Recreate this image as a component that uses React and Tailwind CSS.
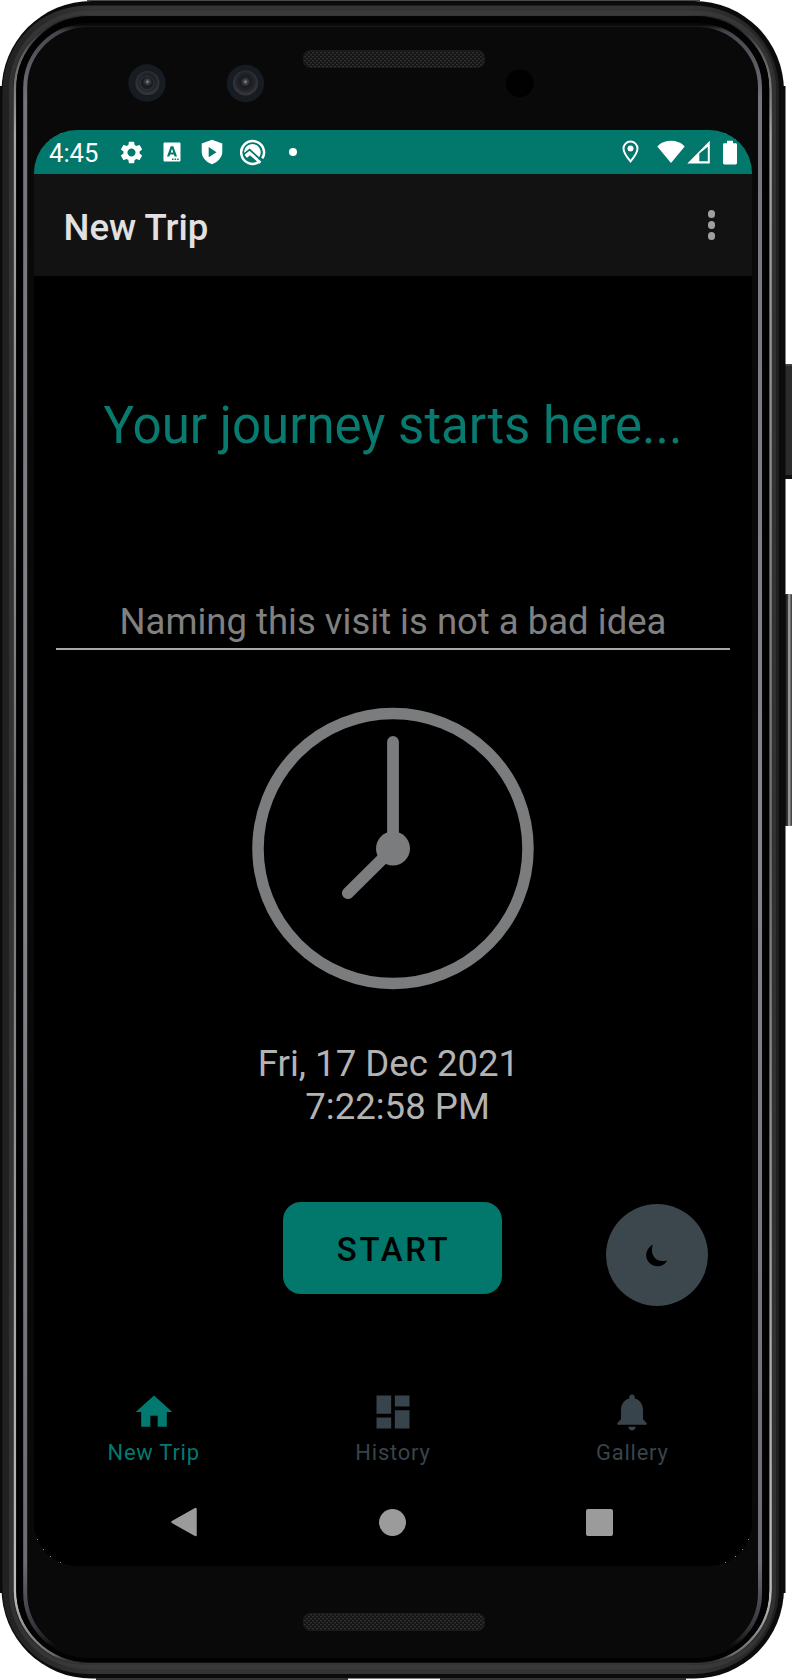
import React from "react";
import { MdSettings, MdHome, MdDashboard } from "react-icons/md";

function PhoneFrame() {
  return (
    <svg className="absolute inset-0" width="792" height="1680" viewBox="0 0 792 1680" aria-hidden="true">
      <defs>
        <linearGradient id="rim" gradientUnits="userSpaceOnUse" x1="0" y1="0" x2="0" y2="1680">
          <stop offset="0.009" stopColor="#3c3c3c" stopOpacity="0" />
          <stop offset="0.03" stopColor="#5a5a5a" />
          <stop offset="0.08" stopColor="#a6a6a6" />
          <stop offset="0.3" stopColor="#8a8a8a" />
          <stop offset="0.5" stopColor="#707070" />
          <stop offset="0.8" stopColor="#aaaaaa" />
          <stop offset="0.95" stopColor="#bdbdbd" />
          <stop offset="0.985" stopColor="#6a6a6a" />
          <stop offset="0.991" stopColor="#3c3c3c" stopOpacity="0" />
        </linearGradient>
        <linearGradient id="glass" gradientUnits="userSpaceOnUse" x1="0" y1="0" x2="0" y2="1680">
          <stop offset="0.0149" stopColor="#5a5a62" stopOpacity="0" />
          <stop offset="0.019" stopColor="#45454c" />
          <stop offset="0.06" stopColor="#74747c" />
          <stop offset="0.5" stopColor="#85858c" />
          <stop offset="0.93" stopColor="#6c6c74" />
          <stop offset="0.965" stopColor="#3a3a42" />
          <stop offset="0.98" stopColor="#5a5a62" stopOpacity="0" />
        </linearGradient>
        <linearGradient id="band" x1="0" y1="0" x2="1" y2="0">
          <stop offset="0" stopColor="#202020" />
          <stop offset="0.03" stopColor="#262626" />
          <stop offset="0.12" stopColor="#343434" />
          <stop offset="0.88" stopColor="#343434" />
          <stop offset="0.97" stopColor="#262626" />
          <stop offset="1" stopColor="#202020" />
        </linearGradient>
        <linearGradient id="volume" x1="0" y1="0" x2="1" y2="0">
          <stop offset="0" stopColor="#151515" />
          <stop offset="0.35" stopColor="#343434" />
          <stop offset="0.55" stopColor="#b0b0b0" />
          <stop offset="1" stopColor="#303030" />
        </linearGradient>
        <radialGradient id="lens" cx="0.5" cy="0.45" r="0.5">
          <stop offset="0" stopColor="#9d9da8" />
          <stop offset="0.14" stopColor="#454550" />
          <stop offset="0.4" stopColor="#191a20" />
          <stop offset="0.75" stopColor="#24262b" />
          <stop offset="1" stopColor="#34373c" />
        </radialGradient>
        <pattern id="mesh" width="4" height="4" patternUnits="userSpaceOnUse">
          <rect width="4" height="4" fill="#151515" />
          <rect width="2" height="1.3" fill="#303030" />
          <rect x="2" y="2" width="2" height="1.3" fill="#303030" />
        </pattern>
      </defs>
      <rect x="784" y="364" width="8" height="115" fill="#2b2b2b" />
      <rect x="784" y="364" width="8" height="2" fill="#444444" />
      <rect x="784" y="475" width="8" height="4" fill="#111111" />
      <rect x="785" y="594" width="7" height="232" rx="1" fill="url(#volume)" />
      <rect x="0" y="86" width="785.5" height="1507" fill="#0b0b0b" />
      <rect x="1.500" y="1" width="782.500" height="1677.500" rx="90" fill="#0b0b0b" />
      <path d="M87 0.5H700" stroke="#4a4a4a" />
      <path d="M96 1679H348M440 1679H686" stroke="#333333" strokeWidth="2" />
      <rect x="2.500" y="5.500" width="776.5" height="1668.5" rx="85" fill="url(#band)" />
      <rect x="11" y="13" width="763" height="1654" rx="76" fill="none" stroke="#404040" strokeWidth="4" opacity="0.55" />
      <rect x="15" y="16" width="755.5" height="1647" rx="73" fill="#020202" stroke="url(#rim)" strokeWidth="2.6" />
      <rect x="23" y="23" width="739.5" height="1635" rx="65" fill="#090909" />
      <rect x="17" y="18" width="751.500" height="1643" rx="71" fill="none" stroke="#020202" strokeWidth="1.500" />
      <rect x="25.2" y="25" width="734.8" height="1631" rx="63" fill="none" stroke="url(#glass)" strokeWidth="4" />
      <circle cx="147" cy="83" r="18.7" fill="#161c22" />
      <circle cx="147.5" cy="83" r="12" fill="url(#lens)" />
      <circle cx="147" cy="83" r="7" fill="none" stroke="#34363b" strokeWidth="1" />
      <circle cx="245.5" cy="83.5" r="18.7" fill="#161c22" />
      <circle cx="245.5" cy="83" r="12.5" fill="url(#lens)" />
      <circle cx="519.8" cy="83.3" r="13.8" fill="#010101" />
      <rect x="303.500" y="50.5" width="181" height="17" rx="7" fill="url(#mesh)" stroke="#1c1c1c" />
      <rect x="303.500" y="1613.5" width="181" height="17" rx="7" fill="url(#mesh)" stroke="#1c1c1c" />
      <path d="M34 174V1523A43 43 0 0 0 77 1566H709A43 43 0 0 0 752 1523V174z" fill="#000000" />
      <path d="M37 1539h1v1h-1zM43 1549h1v1h-1zM50 1556h1v1h-1zM60 1562h1v1h-1zM748 1539h1v1h-1zM742 1549h1v1h-1zM735 1556h1v1h-1zM725 1562h1v1h-1zM50 139h1v1h-1zM60 133h1v1h-1zM725 133h1v1h-1zM735 139h1v1h-1z" fill="#8a8a8a" />
    </svg>
  );
}

function StatusBar() {
  return (
    <div className="flex h-11 shrink-0 items-center bg-[#02776c] pl-[15px] pr-[15px] text-white">
      <span className="w-[66px] pt-[2px] text-[25.6px] leading-[30px]">4:45</span>
      <div className="flex items-center">
        <MdSettings className="ml-[3px] size-[27px]" />
        <svg className="ml-[18px]" width="18" height="20" viewBox="0 0 18 20">
          <path fillRule="evenodd" fill="currentColor" d="M1.5.5h15q1 0 1 1v17q0 1-1 1h-15q-1 0-1-1v-17q0-1 1-1zM7.7 4.2 4 14.5h2.4l.7-2.1h3.8l.7 2.1H14L10.3 4.2zM9 6.8l1.3 3.8H7.7zM9 16.4h1.5v1.5H9zm2.6 0h1.5v1.5h-1.5zm2.6 0h1.5v1.5h-1.5z" />
        </svg>
        <svg className="ml-[19px]" width="24" height="26" viewBox="0 0 24 26">
          <path fillRule="evenodd" fill="currentColor" d="M12 .8 22.3 4.6v8.2c0 5.7-4.3 10.2-10.3 12.5C6 23 1.7 18.5 1.7 12.8V4.6zM8.7 8v10.3l7.8-5.1z" />
        </svg>
        <svg className="ml-[15px]" width="27" height="27" viewBox="0 0 27 27" fill="none" stroke="currentColor">
          <path d="M19.6 23.100A11.4 11.4 0 1 1 23.300 19.400" strokeWidth="2.500" />
          <path d="M5.300 15A8.300 8.300 0 1 1 20.600 17.600L18.300 20.200 11.500 13.800 7.500 18.500z" fill="currentColor" stroke="none" />
          <path d="M4.600 15.400 10.600 10.600 19.600 19" stroke="#02776c" strokeWidth="1.800" />
          <path d="M7.300 17.800 11 14.500 21.500 23.800" strokeWidth="2.600" />
        </svg>
        <span className="ml-[23px] size-2 rounded-full bg-white" />
      </div>
      <div className="ml-auto flex items-center">
        <svg width="17" height="24" viewBox="0 0 17 24">
          <path d="M8.5 1.6A7 7 0 0 0 1.5 8.6c0 4.7 7 12.8 7 12.8s7-8.1 7-12.8a7 7 0 0 0-7-7z" fill="none" stroke="currentColor" strokeWidth="2" />
          <circle cx="8.5" cy="8.6" r="3" fill="currentColor" />
        </svg>
        <svg className="ml-[18px]" width="28" height="24" viewBox="0 0 28 24" fill="currentColor">
          <path d="M.3 6.4C4 2.6 8.500.8 14 .8s10 1.800 13.700 5.600L14 23z" />
        </svg>
        <svg className="ml-[2px]" width="23" height="24" viewBox="0 0 23 24">
          <path fillRule="evenodd" fill="currentColor" d="M22.800.8V23.400H.3zM20.800 6.800 12.300 13.500v7.700h8.500z" />
        </svg>
        <svg className="ml-[13px]" width="14" height="25" viewBox="0 0 14 25" fill="currentColor">
          <path d="M4 .7h6v2.500h2.600q1.400 0 1.400 1.400v18.500q0 1.400-1.400 1.400H1.400Q0 24.500 0 23.100V4.600q0-1.400 1.400-1.400H4z" />
        </svg>
      </div>
    </div>
  );
}

function AppBar() {
  return (
    <header className="flex h-[102px] shrink-0 items-center justify-between bg-[#121212] pl-[29.500px] pr-[37px]">
      <h1 className="pt-[6px] text-[36.600px] font-medium leading-[44px] text-[#e1e1e1]">New Trip</h1>
      <button aria-label="More" className="flex flex-col gap-[3.500px]">
        <span className="size-[7.500px] rounded-full bg-[#a0a0a0]" />
        <span className="size-[7.500px] rounded-full bg-[#a0a0a0]" />
        <span className="size-[7.500px] rounded-full bg-[#a0a0a0]" />
      </button>
    </header>
  );
}

function Clock() {
  return (
    <svg className="ml-[217px] mt-[57px] block shrink-0" width="284" height="283" viewBox="0 0 284 283" fill="none" stroke="#7b7c7d">
      <circle cx="142" cy="141.500" r="135" strokeWidth="11.500" />
      <path d="M142 35v106.500L96.800 186.200" strokeWidth="11.800" strokeLinecap="round" />
      <circle cx="142" cy="141.500" r="17" fill="#7b7c7d" stroke="none" />
    </svg>
  );
}

function BellIcon({ className }) {
  return (
    <svg className={className} viewBox="0 0 24 24" fill="currentColor">
      <path d="M12 22c1.100 0 2-.9 2-2h-4c0 1.100.890 2 2 2zm6-6v-5c0-3.070-1.640-5.640-4.500-6.320V4c0-.830-.670-1.500-1.500-1.500s-1.500.670-1.500 1.500v.680C7.630 5.360 6 7.920 6 11v5l-2 2v1h16v-1z" />
    </svg>
  );
}

function Tab({ icon: Icon, label, color }) {
  return (
    <button className={"flex flex-1 flex-col items-center " + color}>
      <Icon className="size-[44px]" />
      <span className="mt-[6px] text-[21.900px] leading-[26px] tracking-[0.800px]">{label}</span>
    </button>
  );
}

export default function App() {
  return (
    <div className="relative h-[1680px] w-[792px] overflow-hidden bg-white pl-[34px] pt-[130px] font-['Roboto',sans-serif]">
      <PhoneFrame />
      <div className="relative flex h-[1436px] w-[718px] flex-col overflow-hidden rounded-t-[43px]">
        <StatusBar />
        <AppBar />
        <main className="flex flex-col">
          <h2 className="mt-[120px] text-center text-[51px] leading-[60px] text-[#087a6f]">Your journey starts here...</h2>
          <div className="mx-[22px] mt-[144px] h-[50px] border-b-2 border-[#a8a8a8] text-center text-[36.500px] leading-[44px] text-[#808080]">
            Naming this visit is not a bad idea
          </div>
          <Clock />
          <p className="mt-[53px] whitespace-pre text-center text-[36.600px] leading-[42.500px] text-[#b3b3b3]">{"Fri, 17 Dec 2021 \n 7:22:58 PM"}</p>
          <div className="mt-[74px] grid grid-cols-[249px_219px_102px] items-start">
            <button className="col-start-2 h-[92px] rounded-[18px] bg-[#02776c] pl-[2px] pt-[3px] text-[32.900px] font-medium tracking-[2.700px] text-black">START</button>
            <button aria-label="Dark mode" className="ml-[104px] mt-[2px] flex size-[102px] items-center justify-center rounded-full bg-[#3b474d]">
              <svg className="-ml-px" width="23" height="23" viewBox="0 0 23 23">
                <path d="M8 .8A11.200 11.200 0 1 0 22.200 16.500C16 18.200 10.600 16.300 8.500 12 6.500 8.500 6.400 4.500 8 .8z" fill="#000000" />
              </svg>
            </button>
          </div>
        </main>
        <nav className="mt-[84px] flex">
          <Tab icon={MdHome} label="New Trip" color="text-[#027a6f]" />
          <Tab icon={MdDashboard} label="History" color="text-[#37444b]" />
          <Tab icon={BellIcon} label="Gallery" color="text-[#37444b]" />
        </nav>
        <div className="mt-[41px] flex items-center pl-[136px]">
          <svg width="27" height="30" viewBox="0 0 27 30">
            <path d="M25.500 2v26L2.500 15z" fill="#9b9b9b" stroke="#9b9b9b" strokeWidth="2.500" strokeLinejoin="round" />
          </svg>
          <span className="ml-[182px] size-[27px] rounded-full bg-[#9b9b9b]" />
          <span className="ml-[180px] size-[27px] rounded-[2px] bg-[#9b9b9b]" />
        </div>
      </div>
    </div>
  );
}
